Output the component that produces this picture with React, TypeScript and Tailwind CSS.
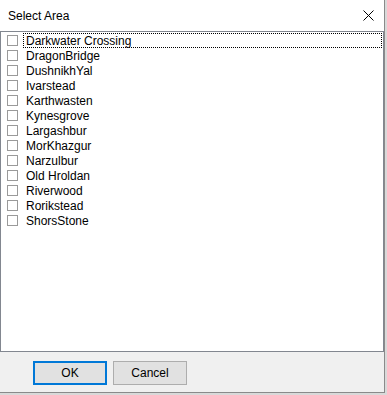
import React from 'react';

const areas = [
  'Darkwater Crossing',
  'DragonBridge',
  'DushnikhYal',
  'Ivarstead',
  'Karthwasten',
  'Kynesgrove',
  'Largashbur',
  'MorKhazgur',
  'Narzulbur',
  'Old Hroldan',
  'Riverwood',
  'Rorikstead',
  'ShorsStone',
];

const App: React.FC = () => {
  return (
    <div className="w-[387px] h-[395px] bg-[#d9d9d9] font-['Liberation_Sans',Arial,sans-serif] text-[12px] text-black overflow-hidden">
      <div className="w-[385px] h-[393px] flex flex-col bg-[#f0f0f0] border-r border-b border-[#8a8a8a]">
        {/* Title bar */}
        <div className="h-[31px] shrink-0 bg-white flex items-center justify-between pl-[8px] pr-[10px]">
          <span className="leading-none">Select Area</span>
          <svg width="11" height="11" viewBox="0 0 11 11" className="block">
            <path d="M0.5 0.5 L10.5 10.5 M10.5 0.5 L0.5 10.5" stroke="#000" strokeWidth="1" fill="none" />
          </svg>
        </div>

        {/* List box */}
        <div className="h-[321px] w-[384px] shrink-0 bg-white border border-[#828790] pt-[1px]">
          {areas.map((name, i) => (
            <div key={name} className="h-[15px] flex items-center">
              <div className="ml-[6px] w-[11px] h-[11px] border border-[#9a9a9a] bg-white shrink-0" />
              <div
                className={`ml-[5px] h-[15px] flex items-center pl-[2px] ${
                  i === 0 ? 'flex-1 mr-[1px] border border-dotted border-black' : 'border border-transparent'
                }`}
              >
                <span className="leading-none">{name}</span>
              </div>
            </div>
          ))}
        </div>

        {/* Buttons */}
        <div className="flex gap-[6px] pl-[33px] pt-[9px]">
          <button className="w-[74px] h-[24px] bg-[#e1e1e1] border-2 border-[#0078d7] flex items-center justify-center">
            OK
          </button>
          <button className="w-[74px] h-[24px] bg-[#e1e1e1] border border-[#adadad] flex items-center justify-center">
            Cancel
          </button>
        </div>
      </div>
    </div>
  );
};

export default App;
